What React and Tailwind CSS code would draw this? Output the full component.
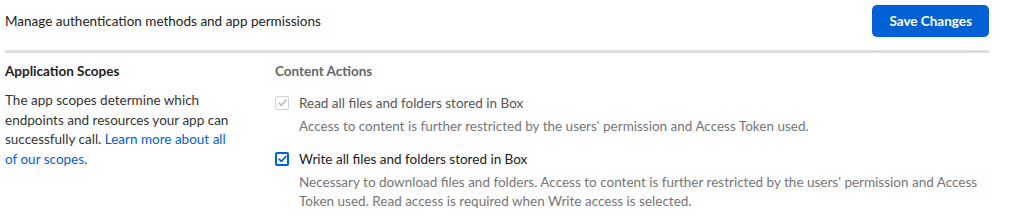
import React, { useState } from "react";

function Check({ checked, disabled, onChange }) {
  return (
    <button
      type="button"
      onClick={onChange}
      disabled={disabled}
      className={
        "w-[14px] h-[14px] shrink-0 rounded-[2px] border flex items-center justify-center bg-white " +
        (disabled ? "border-[#d3d3d3]" : "border-[#0061d5] border-2")
      }
    >
      {checked && (
        <svg width="9" height="8" viewBox="0 0 9 8">
          <path
            d="M1.2 4.2 L3.4 6.3 L7.8 1.5"
            fill="none"
            stroke={disabled ? "#bdbdbd" : "#0061d5"}
            strokeWidth="1.8"
            strokeLinecap="round"
            strokeLinejoin="round"
          />
        </svg>
      )}
    </button>
  );
}

export default function App() {
  const [write, setWrite] = useState(true);

  return (
    <div className="w-[1011px] h-[222px] bg-white text-[13.5px] text-[#222] font-['Lato','Noto_Sans',sans-serif] overflow-hidden">
      {/* Header */}
      <div className="w-[984px] ml-[5px] flex items-center justify-between h-[53px] border-b-[3px] border-[#dedede] pb-[8px]">
        <span>Manage authentication methods and app permissions</span>
        <button className="h-[32px] px-[17px] rounded-[5px] bg-[#0061d5] text-white font-bold text-[13.5px]">
          Save Changes
        </button>
      </div>

      <div className="flex pl-[5px] pt-[8px]">
        {/* Left column */}
        <div className="w-[270px] shrink-0">
          <div className="font-bold leading-[20px]">Application Scopes</div>
          <p className="mt-[10px] w-[230px] leading-[19.5px] text-[#333]">
            The app scopes determine which endpoints and resources your app can successfully call.{" "}
            <a className="text-[#0061d5]">Learn more about all of our scopes.</a>
          </p>
        </div>

        {/* Right column */}
        <div className="flex-1">
          <div className="font-bold text-[#666] leading-[20px]">Content Actions</div>

          <div className="mt-[12px] flex items-center gap-[10px] leading-[20px]">
            <Check checked disabled />
            <span className="text-[#555]">Read all files and folders stored in Box</span>
          </div>
          <p className="ml-[24px] mt-[4px] leading-[19.5px] text-[#767676]">
            Access to content is further restricted by the users' permission and Access Token used.
          </p>

          <div className="mt-[12px] flex items-center gap-[10px] leading-[20px]">
            <Check checked={write} onChange={() => setWrite(!write)} />
            <span>Write all files and folders stored in Box</span>
          </div>
          <p className="ml-[24px] mt-[4px] w-[690px] leading-[19.5px] text-[#767676]">
            Necessary to download files and folders. Access to content is further restricted by the users' permission and Access Token used. Read access is required when Write access is selected.
          </p>
        </div>
      </div>
    </div>
  );
}
